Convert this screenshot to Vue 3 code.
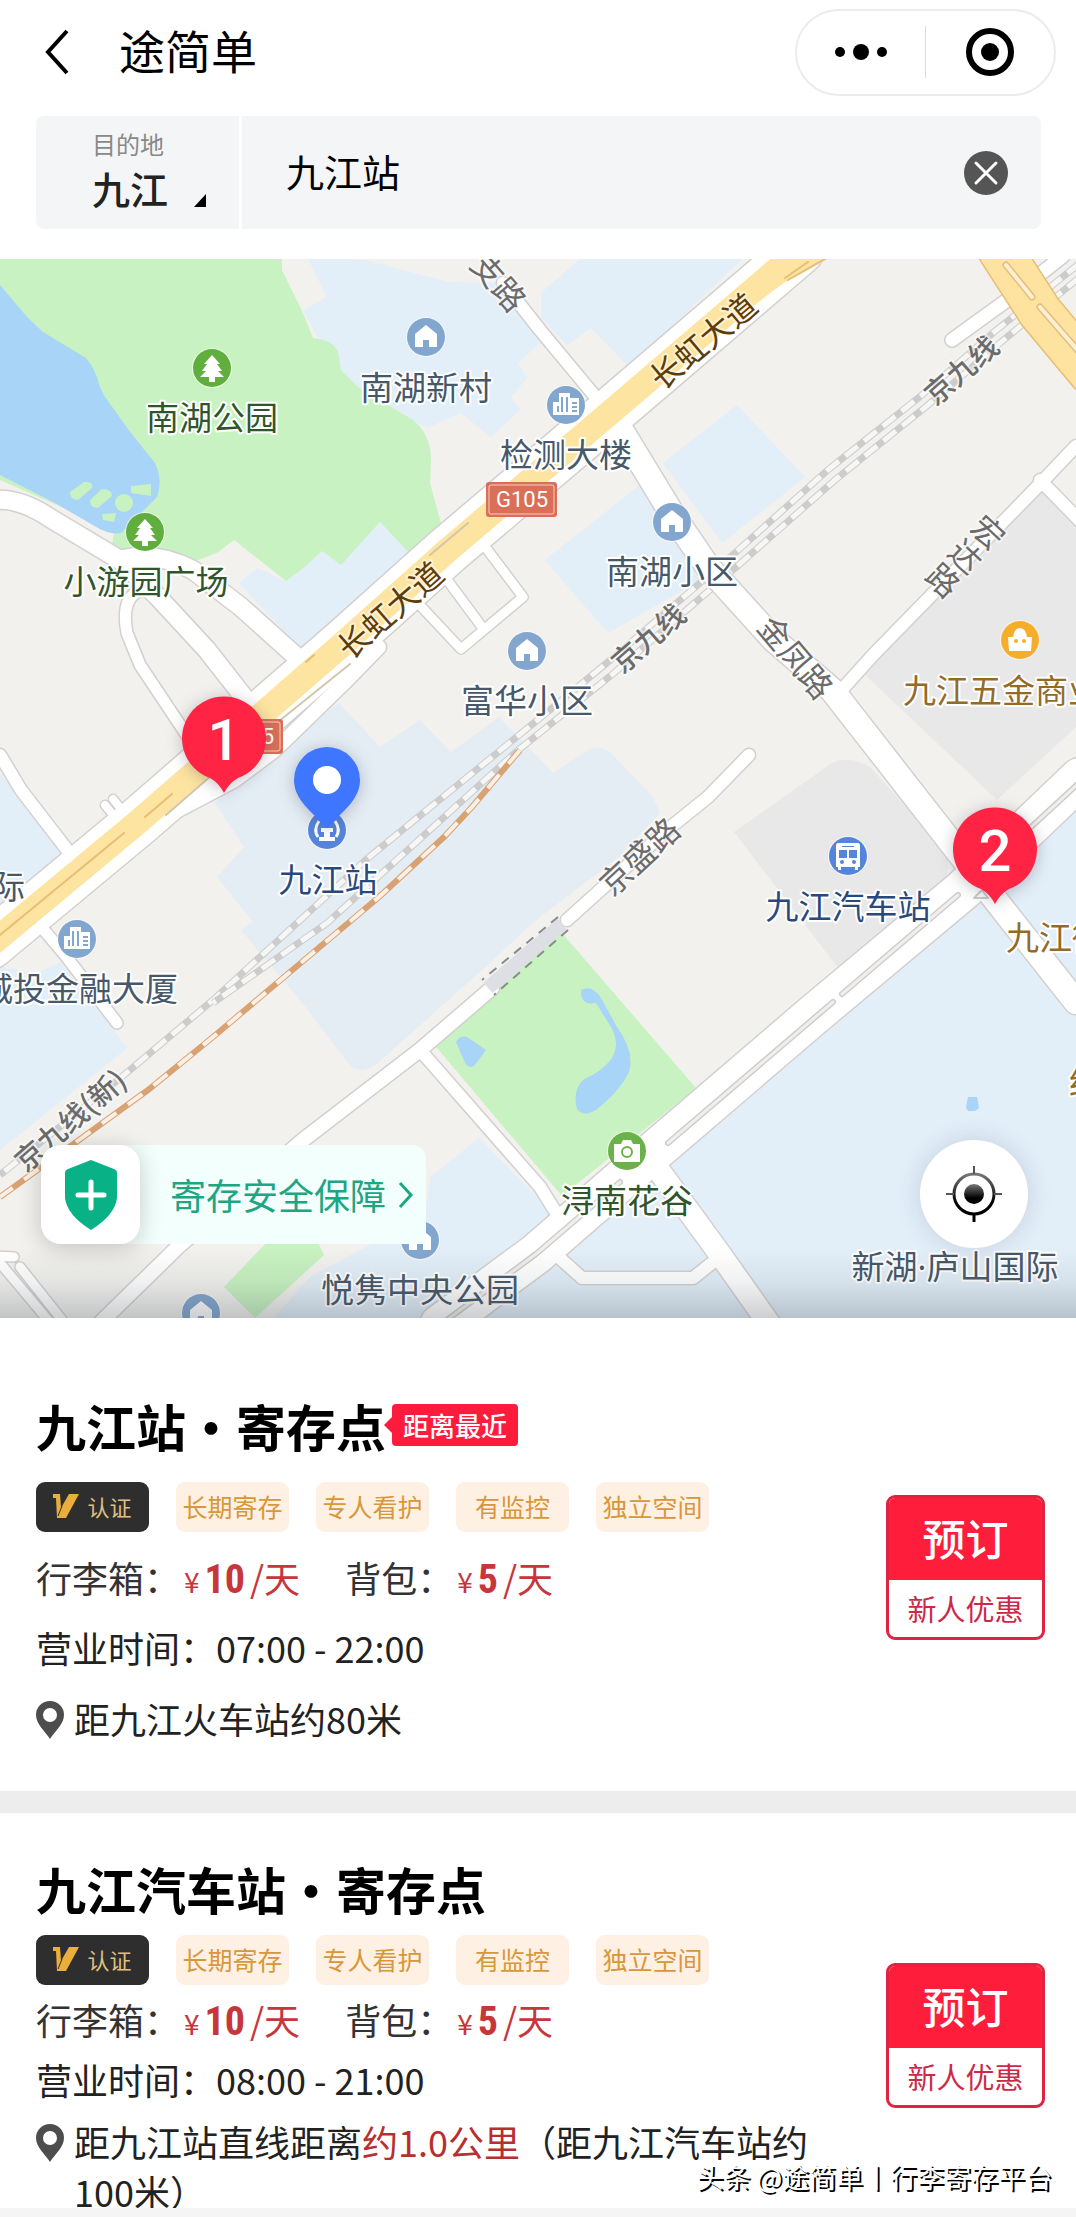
<script setup>
import { ref } from 'vue'

const keyword = ref('九江站')

const areas = [
  // residential and office blocks
  { fill: '#e2eef8', d: 'M306 255L327 297L303 310L318 338L336 347L341 370L358 387L413 420L427 428L461 413L491 437L520 410L511 397L527 378L518 363L546 338L503 283L448 282L365 260Z' },
  { fill: '#e2eef8', d: 'M239 583L258 568L286 581L305 567L322 551L341 565L380 522L411 555L360 610L301 650Z' },
  { fill: '#e2eef8', d: 'M541 293L581 258L743 258L629 367L591 328L567 345L541 317Z' },
  { fill: '#e2eef8', d: 'M737 405L805 477L722 543L663 463Z' },
  { fill: '#e2eef8', d: 'M545 560L650 477L708 550L701 580L608 633Z' },
  { fill: '#e2eef8', d: 'M0 773L64 857L0 913Z' },
  { fill: '#e2eef8', d: 'M0 967L38 973L60 962L127 1048L0 1150Z' },
  { fill: '#e2eef8', d: 'M479 1138L430 1177L425 1215L310 1277L272 1320L448 1320L560 1220Z' },
  { fill: '#e2eef8', d: 'M1076 800L1000 870L940 920L650 1165L458 1320L1076 1320Z' },
  // railway station grounds
  { fill: '#e4ecf4', d: 'M339 703L380 747L420 720L451 752L499 717L553 773L588 750Q600 745 610 752L653 797L660 813L619 857L536 920L482 970L379 1062Q361 1077 348 1063L300 1000L241 930L253 922L217 877L244 847L215 803L230 785Z' },
  // bus station and market
  { fill: '#e8e8e9', d: 'M734 832L832 763Q849 755 870 767L949 853L946 887L842 973Z' },
  { fill: '#e8e8e9', d: 'M1040 487L1076 520L1076 727L997 800L863 673Z' },
  // parks
  { fill: '#c8f2c1', d: 'M0 255L282 255L282 270L303 313L313 338Q333 340 338 352L341 370L358 387L413 420Q432 435 431 463L430 483L442 527L411 555L380 522L341 565L322 551L305 567L286 581L234 540L217 553L193 562L151 555L112 548L114 530L0 480Z' },
  { fill: '#c8f2c1', d: 'M562 933L696 1088L562 1196L432 1042L505 978Z' },
  { fill: '#c8f2c1', d: 'M269 1240L317 1240L324 1255L255 1318L224 1287Z' },
  // water
  { fill: '#a8d4f7', d: 'M0 285L28 318L43 332L86 358Q95 368 100 387L105 397L131 433L155 463Q163 480 157 497L141 513L121 533Q110 535 98 528L55 503L0 475Z' },
  { fill: '#a8d4f7', d: 'M456 1042Q460 1035 467 1037L486 1050L475 1065Q470 1070 465 1063Z' },
  { fill: '#a8d4f7', d: 'M581 990Q592 984 601 998L617 1027Q635 1052 629 1072Q622 1088 602 1105Q586 1120 577 1109Q572 1090 584 1079Q606 1070 614 1054Q620 1040 608 1022L596 1003Q580 1006 581 990Z' },
  { fill: '#a8d4f7', d: 'M968 1097H977L979 1108L975 1111H968L966 1107Z' },
  { fill: '#c8f2c1', d: 'M70 492L84 482Q94 481 92 488L78 500Q70 500 70 492ZM90 500L102 489Q112 489 112 496L98 508Q90 508 90 500ZM131 486L151 484V496L131 493ZM102 514L116 513L114 522L103 520Z' },
]

// white streets with their widths
const streets = [
  { w: 12, d: 'M503 283L540 330L608 412' },
  { w: 24, d: 'M618 425L674 517L708 567L774 640L832 690L949 840L1001 907L1076 1002' },
  { w: 12, d: 'M1076 446L1040 484L873 655L838 694' },
  { w: 12, d: 'M1040 480L1080 521' },
  { w: 13, d: 'M952 340L1010 298L1063 256' },
  { w: 18, d: 'M-5 500Q20 498 50 518L120 560Q155 550 193 570L241 607L300 660' },
  { w: 11, d: 'M143 590Q120 595 127 633L140 665L190 740' },
  { w: 18, d: 'M125 565L158 597L207 650L250 705' },
  { w: 12, d: 'M0 755L21 790L75 860' },
  { w: 8, d: 'M105 805L117 820M113 799L125 814' },
  { w: 11, d: 'M38 923L65 955L117 1023' },
  { w: 14, d: 'M379 647L344 683L275 750L235 780L165 817L110 865' },
  { w: 9, d: 'M415 600L461 649L523 597L480 540M445 577L482 627' },
  { w: 12, d: 'M749 755L708 797L667 830L567 920' },
  { w: 14, d: 'M492 988L420 1050L303 1140L180 1245L98 1325' },
  { w: 12, d: 'M420 1050L540 1187L562 1222' },
  { w: 22, d: 'M655 1165L722 1257L770 1325' },
  { w: 12, d: 'M553 1252L582 1278H693L722 1255' },
  { w: 9, d: 'M-4 1256L14 1257M0 1263L52 1325M20 1267L66 1325' },
]

const rails = [
  'M1080 263L994 332L922 395L829 469L736 552L608 662L540 718L368 858L213 1000L124 1075L0 1175',
  'M1080 277L1000 343L928 405L835 480L742 562L614 673L516 752L327 923L213 1003',
]

const green = '#30552a'
const slate = '#46586a'
const navy = '#29497c'
const brown = '#946a26'

const labels = [
  { text: '南湖公园', x: 212, y: 430, color: green },
  { text: '小游园广场', x: 146, y: 594, color: green },
  { text: '南湖新村', x: 426, y: 400, color: slate },
  { text: '检测大楼', x: 566, y: 467, color: slate },
  { text: '南湖小区', x: 672, y: 584, color: slate },
  { text: '富华小区', x: 527, y: 713, color: slate },
  { text: '九江站', x: 328, y: 892, color: navy },
  { text: '九江汽车站', x: 848, y: 919, color: navy },
  { text: '浔南花谷', x: 627, y: 1213, color: green },
  { text: '悦隽中央公园', x: 420, y: 1302, color: slate },
  { text: '新湖·庐山国际', x: 955, y: 1279, color: slate },
  { text: '九江五金商业', x: 903, y: 703, color: brown, anchor: 'start' },
  { text: '九江街', x: 1006, y: 950, color: brown, anchor: 'start' },
  { text: '红', x: 1069, y: 1094, color: brown, anchor: 'start' },
  { text: '际', x: 25, y: 899, color: slate, anchor: 'end' },
  { text: '城投金融大厦', x: 178, y: 1001, color: slate, anchor: 'end' },
]

const roadLabels = [
  { text: '长虹大道', x: 704, y: 342, angle: -40, color: '#5b3c0c' },
  { text: '长虹大道', x: 391, y: 611, angle: -41, color: '#5b3c0c' },
  { text: '京九线', x: 961, y: 370, angle: -41, color: '#6b6b6b', bold: true },
  { text: '京九线', x: 648, y: 638, angle: -41, color: '#6b6b6b', bold: true },
  { text: '京九线(新)', x: 70, y: 1120, angle: -41, color: '#6b6b6b', bold: true },
  { text: '支路', x: 498, y: 283, angle: 49, color: '#6b6b6b' },
  { text: '金凤路', x: 795, y: 658, angle: 50, color: '#6b6b6b' },
  { text: '京盛路', x: 640, y: 857, angle: -43, color: '#6b6b6b' },
]

const pois = [
  { icon: 'tree', x: 212, y: 368, color: '#5fae3e' },
  { icon: 'tree', x: 145, y: 532, color: '#5fae3e' },
  { icon: 'house', x: 426, y: 337, color: '#83a6cf' },
  { icon: 'house', x: 672, y: 522, color: '#83a6cf' },
  { icon: 'house', x: 527, y: 651, color: '#83a6cf' },
  { icon: 'house', x: 420, y: 1240, color: '#83a6cf' },
  { icon: 'house', x: 201, y: 1313, color: '#83a6cf' },
  { icon: 'office', x: 566, y: 405, color: '#83a6cf' },
  { icon: 'office', x: 77, y: 939, color: '#83a6cf' },
  { icon: 'bag', x: 1020, y: 640, color: '#f5ae2c' },
  { icon: 'bus', x: 848, y: 856, color: '#5585da' },
  { icon: 'camera', x: 627, y: 1151, color: '#69b148' },
  { icon: 'train', x: 327, y: 830, color: '#5585da' },
]

const pins = [
  { no: 1, x: 224, y: 739 },
  { no: 2, x: 995, y: 850 },
]

const tags = ['长期寄存', '专人看护', '有监控', '独立空间']

const spots = [
  { id: 1, name: '九江站・寄存点', nearest: true, hours: '07:00 - 22:00', place: '距九江火车站约80米' },
  {
    id: 2,
    name: '九江汽车站・寄存点',
    compact: true,
    hours: '08:00 - 21:00',
    place: '距九江站直线距离',
    distance: '约1.0公里',
    note: '（距九江汽车站约100米）',
  },
]
</script>

<template>
  <div class="page">
    <header class="navbar">
      <button class="back" aria-label="返回">
        <svg viewBox="0 0 26 46" width="26" height="46">
          <path d="M23 2L4 23L23 44" fill="none" stroke="#000" stroke-width="4" />
        </svg>
      </button>
      <h1 class="title">途简单</h1>
      <div class="capsule">
        <button aria-label="更多">
          <svg viewBox="0 0 54 18" width="54" height="18">
            <circle cx="6" cy="9" r="5" />
            <circle cx="27" cy="9" r="8" />
            <circle cx="48" cy="9" r="5" />
          </svg>
        </button>
        <span class="capsule-line"></span>
        <button aria-label="关闭">
          <svg viewBox="0 0 50 50" width="50" height="50">
            <circle cx="25" cy="25" r="21" fill="none" stroke="#000" stroke-width="6" />
            <circle cx="25" cy="25" r="9" />
          </svg>
        </button>
      </div>
    </header>

    <div class="search">
      <button class="city">
        <span class="city-label">目的地</span>
        <span class="city-name">
          九江
          <svg viewBox="0 0 12 13" width="12" height="13"><path d="M12 0V13H0Z" /></svg>
        </span>
      </button>
      <div class="field">
        <input v-model="keyword" type="text" aria-label="搜索地点" />
        <button class="clear" aria-label="清空" @click="keyword = ''">
          <svg viewBox="0 0 44 44" width="44" height="44">
            <circle cx="22" cy="22" r="22" fill="#555" />
            <path d="M12 12L32 32M32 12L12 32" stroke="#fff" stroke-width="3" stroke-linecap="round" />
          </svg>
        </button>
      </div>
    </div>

    <section class="map">
      <svg class="map-canvas" viewBox="0 259 1076 1059">
        <rect y="259" width="1076" height="1059" fill="#f2f1ee" />
        <path v-for="(area, i) in areas" :key="i" :d="area.d" :fill="area.fill" />
        <circle cx="124" cy="503" r="9" fill="#c8f2c1" />

        <!-- railways -->
        <g fill="none">
          <g v-for="d in rails" :key="d">
            <path :d="d" stroke="#cccccd" stroke-width="7" />
            <path :d="d" stroke="#f6f6f5" stroke-width="5" stroke-dasharray="16 8" />
          </g>
          <path d="M520 750L472 807L444 837L379 897L213 1037L148 1090L79 1140L0 1197" stroke="#d9a273" stroke-width="6" />
          <path d="M520 750L472 807L444 837L379 897L213 1037L148 1090L79 1140L0 1197" stroke="#fbf0e3" stroke-width="4" stroke-dasharray="18 14" />
        </g>

        <!-- streets: every casing first, then the fill, so that junctions stay open -->
        <g fill="none" stroke-linecap="round" stroke-linejoin="round">
          <path v-for="s in streets" :key="s.d" :d="s.d" stroke="#d3d1cf" :stroke-width="s.w + 3" />
          <path d="M440 1325L536 1254L657 1149L811 1017L963 890L1080 778" stroke="#d3d1cf" stroke-width="43" />
          <path d="M-10 945L138 822L344 643L448 550L605 417L674 358L800 250" stroke="#d3d1cf" stroke-width="51" />
          <path v-for="s in streets" :key="'f' + s.d" :d="s.d" stroke="#fff" :stroke-width="s.w" />
          <path d="M440 1325L536 1254L657 1149L811 1017L963 890L1080 778" stroke="#fff" stroke-width="40" />
          <path d="M440 1325L536 1254L620 1182M668 1143L833 1002M842 994L958 895M1030 828L1080 782" stroke="#cfcccb" stroke-width="6" />
          <path d="M440 1325L536 1254L620 1182M668 1143L833 1002M842 994L958 895M1030 828L1080 782" stroke="#f1efed" stroke-width="3" />
          <path d="M974 898L982 890L988 898Z" stroke="#cfcccb" stroke-width="2" />
          <path d="M-10 945L138 822L344 643L448 550L605 417L674 358L800 250" stroke="#fff" stroke-width="48" />
          <path d="M-10 945L138 822L344 643L448 550L605 417L674 358L800 250" stroke="#fde4a0" stroke-width="25" />
          <path d="M690 345L780 277L830 250" stroke="#fde4a0" stroke-width="14" />
          <path d="M785 278L808 262M788 280L830 256M0 935L124 833M145 817L172 794M306 662L314 655" stroke="#e8bd78" stroke-width="2" />
          <path d="M166 815L212 775L350 664M430 555L468 523" stroke="#d4c6ac" stroke-width="2" />
          <path d="M1000 250L1040 312L1090 372" stroke="#e9bd72" stroke-width="46" />
          <path d="M1000 250L1040 312L1090 372" stroke="#fde2a0" stroke-width="43" />
          <path d="M1006 265L1032 297M1040 307L1080 353" stroke="#e6bd7d" stroke-width="7" />
          <path d="M1006 265L1032 297M1040 307L1080 353" stroke="#fcf0d2" stroke-width="4" />
        </g>

        <!-- tunnel -->
        <path d="M562 924L488 988" stroke="#dedfe4" stroke-width="14" />
        <path d="M558 917L482 980M568 930L494 995" stroke="#8b8b8f" stroke-width="2" stroke-dasharray="9 7" />

        <g class="road-names">
          <text
            v-for="(l, i) in roadLabels"
            :key="i"
            :transform="`translate(${l.x} ${l.y}) rotate(${l.angle})`"
            :fill="l.color"
            :class="{ rail: l.bold }"
            y="11"
          >{{ l.text }}</text>
          <text transform="translate(965 557) rotate(43)" x="0 0 0" y="-22 11 44" fill="#6b6b6b">宏达路</text>
        </g>

        <!-- road number shields -->
        <g v-for="b in [[486, 482], [212, 719]]" :key="b[0]" :transform="`translate(${b[0]} ${b[1]})`">
          <rect width="71" height="35" rx="3" fill="#d96f57" />
          <rect x="3" y="3" width="65" height="29" rx="2" fill="none" stroke="#f5d0c4" stroke-width="1" />
          <text class="shield" x="36" y="25">G105</text>
        </g>

        <!-- points of interest -->
        <g v-for="(p, i) in pois" :key="i" :transform="`translate(${p.x} ${p.y})`">
          <circle r="20" fill="#fff" opacity=".6" />
          <circle r="19" :fill="p.color" />
          <path v-if="p.icon === 'tree'" fill="#fff" d="M0-13L8-4H5L10 3H6L12 9H3V14H-3V9H-12L-6 3H-10L-5-4H-8Z" />
          <path v-else-if="p.icon === 'house'" fill="#fff" d="M0-12L11-3V10H3V3H-3V10H-11V-3Z" />
          <g v-else-if="p.icon === 'office'">
            <path fill="#fff" d="M-13 10V-3H-7V-12H4V-7H13V10Z" />
            <path :stroke="p.color" stroke-width="2" d="M-8 7V1M-4 7V-8M1 7V-8M6-2H11M6 2H11M6 6H11" />
          </g>
          <g v-else-if="p.icon === 'bag'">
            <path fill="#fff" d="M-11 11L-12-3H12L11 11Z" />
            <path fill="#fff" d="M-7-2Q-6-12 0-12Q6-12 7-2Z" />
            <circle cx="-4" cy="1" r="2" :fill="p.color" />
            <circle cx="4" cy="1" r="2" :fill="p.color" />
          </g>
          <g v-else-if="p.icon === 'bus'">
            <path fill="#fff" d="M-10-13H10Q12-13 12-10V11H10V14H7V11H-7V14H-10V11H-12V-10Q-12-13-10-13Z" />
            <path :fill="p.color" d="M-9-6H-1V2H-9ZM1-6H9V2H1ZM-6-10H6V-9H-6Z" />
            <circle cx="-6" cy="6" r="2" :fill="p.color" />
            <circle cx="6" cy="6" r="2" :fill="p.color" />
          </g>
          <g v-else-if="p.icon === 'camera'">
            <path fill="#fff" d="M-13-7H-6L-4-11H4L6-7H13V11H-13Z" />
            <circle cy="1" r="5" fill="none" :stroke="p.color" stroke-width="2" />
          </g>
          <g v-else>
            <path fill="none" stroke="#fff" stroke-width="3" d="M-8-9Q-14 0-9 7M8-9Q14 0 9 7" />
            <path fill="#fff" d="M-6-2H6V2H3V7H8V11H-8V7H-3V2H-6Z" />
          </g>
        </g>

        <g class="place-names">
          <text
            v-for="l in labels"
            :key="l.text"
            :x="l.x"
            :y="l.y"
            :fill="l.color"
            :text-anchor="l.anchor || 'middle'"
          >{{ l.text }}</text>
        </g>

        <!-- current position -->
        <g class="drop" transform="translate(327 780)">
          <path fill="#3f76ff" d="M-33 0A33 33 0 1 1 33 0C33 20 15 31 3 46Q0 50-3 46C-15 31-33 20-33 0Z" />
          <circle r="14" fill="#fff" />
        </g>

        <g v-for="p in pins" :key="p.no" class="drop" :transform="`translate(${p.x} ${p.y})`">
          <path fill="#ff2344" d="M-14 39A42 42 0 1 1 14 39Q5 44 0 54Q-5 44-14 39Z" />
          <text class="pin-no" y="21">{{ p.no }}</text>
        </g>
      </svg>

      <a class="safety" href="#">
        <span class="safety-icon">
          <svg viewBox="0 0 54 70" width="54" height="70">
            <path fill="#09b286" d="M27 0L50 9Q53 10 53 13V38Q51 55 27 70Q3 55 1 38V13Q1 10 4 9Z" />
            <path d="M27 22V48M14 35H40" stroke="#fff" stroke-width="5" stroke-linecap="round" />
          </svg>
        </span>
        <span class="safety-text">寄存安全保障</span>
        <svg viewBox="0 0 16 28" width="16" height="28">
          <path d="M2 2L13 14L2 26" fill="none" stroke="#1ea582" stroke-width="3" />
        </svg>
      </a>

      <button class="locate" aria-label="定位">
        <svg viewBox="0 0 60 60" width="60" height="60">
          <defs>
            <linearGradient id="locate-ink" x1="0" y1="0" x2="0" y2="1">
              <stop offset="0" stop-color="#777" />
              <stop offset=".7" stop-color="#000" />
            </linearGradient>
          </defs>
          <circle cx="30" cy="30" r="20" fill="none" stroke="url(#locate-ink)" stroke-width="3" />
          <circle cx="30" cy="30" r="10" fill="url(#locate-ink)" />
          <path d="M30 2V10M2 30H10M50 30H58" stroke="#555" stroke-width="2" />
          <path d="M30 50V58" stroke="#000" stroke-width="3" />
        </svg>
      </button>
    </section>

    <main class="list">
      <article v-for="spot in spots" :key="spot.id" class="card" :class="{ compact: spot.compact }">
        <h2 class="name">
          {{ spot.name }}<span v-if="spot.nearest" class="nearest">距离最近</span>
        </h2>
        <div class="body">
          <div class="info">
            <div class="tags">
              <span class="tag verified">
                <svg viewBox="0 0 26 24" width="26" height="24">
                  <path fill="#e9ae3c" d="M0 0H7L8 14L16 0H26L13 24H4L3 4H0Z" />
                  <path d="M9 12L5 22" stroke="#2e2e2e" stroke-width="1" />
                </svg>
                认证
              </span>
              <span v-for="tag in tags" :key="tag" class="tag">{{ tag }}</span>
            </div>
            <p class="row prices">
              <span>行李箱：<span class="price"><small>¥</small><b>10</b>/天</span></span>
              <span>背包：<span class="price"><small>¥</small><b>5</b>/天</span></span>
            </p>
            <p class="row">营业时间：{{ spot.hours }}</p>
            <p class="place">
              <svg viewBox="0 0 28 38" width="28" height="38">
                <path fill="#4d4d4d" fill-rule="evenodd" d="M14 0A14 14 0 0 1 28 14C28 23 19 30 14 38C9 30 0 23 0 14A14 14 0 0 1 14 0ZM14 7A7 7 0 1 0 14 21A7 7 0 1 0 14 7Z" />
              </svg>
              <span>{{ spot.place }}<em v-if="spot.distance">{{ spot.distance }}</em>{{ spot.note }}</span>
            </p>
          </div>
          <button class="book">
            <span class="book-main">预订</span>
            <span class="book-offer">新人优惠</span>
          </button>
        </div>
      </article>
    </main>

    <div class="watermark">头条 @途简单丨行李寄存平台</div>
    <footer class="bottom"></footer>
  </div>
</template>

<style>
body {
  margin: 0;
  background: #fff;
}
</style>

<style scoped>
.page {
  position: relative;
  display: flex;
  flex-direction: column;
  height: 100vh;
  background: #fff;
  color: #222;
  font-family: "Noto Sans CJK SC", sans-serif;
  font-size: 36px;
}

button {
  display: flex;
  align-items: center;
  justify-content: center;
  margin: 0;
  padding: 0;
  border: 0;
  background: none;
  color: inherit;
  font: inherit;
  cursor: pointer;
}

svg {
  flex: none;
}

/* Navigation bar */
.navbar {
  display: flex;
  align-items: center;
  flex: none;
  height: 88px;
  padding: 8px 20px 8px 44px;
}

.title {
  flex: 1;
  margin: 0 0 0 49px;
  padding-bottom: 6px;
  color: #000;
  font-size: 46px;
  font-weight: 400;
  line-height: 64px;
}

.capsule {
  display: flex;
  align-items: center;
  box-sizing: border-box;
  width: 261px;
  height: 87px;
  border: 2px solid #ececec;
  border-radius: 44px;
}

.capsule button {
  flex: 1;
  height: 100%;
}

.capsule-line {
  width: 1px;
  height: 52px;
  background: #ddd;
}

/* Search */
.search {
  display: flex;
  flex: none;
  gap: 3px;
  height: 113px;
  margin: 12px 35px 30px 36px;
  border-radius: 8px;
  overflow: hidden;
}

.city {
  flex-direction: column;
  align-items: flex-start;
  width: 203px;
  padding: 0 0 5px 56px;
  background: #f4f5f7;
}

.city-label {
  color: #888;
  font-size: 24px;
  line-height: 36px;
}

.city-name {
  display: flex;
  align-items: flex-end;
  gap: 26px;
  color: #222;
  font-size: 38px;
  font-weight: 500;
  line-height: 52px;
}

.city-name svg {
  margin-bottom: 7px;
}

.field {
  display: flex;
  flex: 1;
  align-items: center;
  padding: 0 33px 0 44px;
  background: #f4f5f7;
}

.field input {
  flex: 1;
  min-width: 0;
  padding: 0 0 4px;
  border: 0;
  outline: 0;
  background: none;
  color: #000;
  font: inherit;
  font-size: 38px;
}

/* Map */
.map {
  position: relative;
  flex: none;
}

.map::after {
  content: "";
  position: absolute;
  inset: auto 0 0;
  height: 70px;
  background: linear-gradient(rgba(60, 70, 80, 0), rgba(60, 70, 80, 0.08) 50%, rgba(60, 70, 80, 0.26));
  pointer-events: none;
}

.map-canvas {
  display: block;
  width: 100%;
  height: auto;
}

.place-names text,
.road-names text {
  stroke: #fff;
  stroke-width: 4px;
  stroke-linejoin: round;
  paint-order: stroke;
}

.place-names text {
  font-family: "Noto Sans", "Noto Sans CJK SC", sans-serif;
  font-size: 33px;
}

.road-names text {
  font-size: 32px;
  stroke-opacity: 0.5;
  text-anchor: middle;
}

.road-names .rail {
  font-size: 29px;
  font-weight: 500;
}

.shield {
  fill: #fff;
  font-family: Roboto, sans-serif;
  font-size: 22px;
  text-anchor: middle;
}

.drop {
  filter: drop-shadow(0 2px 8px rgba(60, 60, 80, 0.3));
}

.pin-no {
  fill: #fff;
  font-family: Roboto, sans-serif;
  font-size: 58px;
  font-weight: 500;
  text-anchor: middle;
}

.safety {
  position: absolute;
  z-index: 1;
  left: 41px;
  bottom: 74px;
  display: flex;
  align-items: center;
  width: 385px;
  height: 99px;
  border-radius: 20px 14px 0 20px;
  background: #f3fffc;
  color: #1ea582;
  text-decoration: none;
}

.safety-icon {
  display: flex;
  align-items: center;
  justify-content: center;
  width: 99px;
  height: 99px;
  border-radius: 20px;
  background: #fff;
  box-shadow: 0 4px 24px rgba(0, 0, 0, 0.2);
}

.safety-text {
  margin: 0 12px 0 30px;
  padding-bottom: 2px;
  font-size: 36px;
}

.locate {
  position: absolute;
  z-index: 1;
  right: 48px;
  bottom: 70px;
  width: 108px;
  height: 108px;
  border-radius: 50%;
  background: #fff;
  box-shadow: 0 0 24px rgba(60, 80, 110, 0.18);
}

/* Storage spots */
.list {
  flex: 1;
  min-height: 0;
  overflow-y: auto;
  scrollbar-width: none;
}

.list::-webkit-scrollbar {
  display: none;
}

.card {
  padding: 72px 31px 38px 36px;
}

.card + .card {
  border-top: 22px solid #ededed;
}

.card.compact {
  padding-top: 40px;
  padding-bottom: 0;
}

.name {
  display: flex;
  align-items: center;
  gap: 6px;
  margin: 0 0 22px;
  color: #000;
  font-size: 50px;
  font-weight: 700;
  line-height: 70px;
}

.compact .name {
  margin-bottom: 12px;
}

.nearest {
  position: relative;
  padding: 0 11px;
  border-radius: 4px;
  background: #fd1c3c;
  color: #fff;
  font-size: 26px;
  font-weight: 500;
  line-height: 42px;
}

.nearest::before {
  content: "";
  position: absolute;
  top: 13px;
  left: -8px;
  border: solid transparent;
  border-width: 8px 8px 8px 0;
  border-right-color: #fd1c3c;
}

.body {
  display: flex;
  align-items: flex-start;
  justify-content: space-between;
}

.info {
  flex: 1;
  max-width: 784px;
}

.tags {
  display: flex;
  gap: 27px;
  margin-bottom: 10px;
}

.compact .tags {
  margin-bottom: 4px;
}

.tag {
  display: flex;
  align-items: center;
  justify-content: center;
  gap: 8px;
  box-sizing: border-box;
  width: 113px;
  height: 50px;
  padding-bottom: 3px;
  border-radius: 9px;
  background: #fef0e2;
  color: #d8973a;
  font-size: 25px;
}

.tag.verified {
  background: #2e2e2e;
  color: #e0c080;
  font-size: 22px;
}

.row {
  height: 70px;
  margin: 0;
  line-height: 70px;
}

.compact .row {
  height: 60px;
  line-height: 60px;
}

.prices {
  display: flex;
  gap: 45px;
  color: #333;
}

.price {
  margin-left: 4px;
  color: #c5373b;
}

.price small {
  margin-right: 5px;
  font-size: 28px;
  line-height: 1;
}

.price b {
  margin-right: 5px;
  font-family: "Roboto Condensed", Roboto, sans-serif;
  font-size: 40px;
  line-height: 1;
}

.place {
  display: flex;
  gap: 10px;
  margin: 0;
  line-height: 50px;
  padding: 11px 0 10px;
}

.compact .place {
  padding: 7px 0 0;
}

.place svg {
  margin-top: 8px;
}

.place em {
  color: #b5302f;
  font-style: normal;
}

.book {
  flex-direction: column;
  flex: none;
  box-sizing: border-box;
  width: 159px;
  height: 145px;
  margin-top: 13px;
  border: 3px solid #e02343;
  border-radius: 9px;
  overflow: hidden;
}

.compact .book {
  margin-top: 28px;
}

.book-main {
  width: 100%;
  padding-bottom: 4px;
  background: #fe1d3b;
  color: #fff;
  font-size: 43px;
  font-weight: 500;
  line-height: 78px;
}

.book-offer {
  color: #cc2947;
  font-size: 29px;
  line-height: 57px;
}

.watermark {
  position: absolute;
  right: 24px;
  bottom: 20px;
  color: #fff;
  font-size: 27px;
  line-height: 40px;
  text-shadow: 2px 2px 0 #000;
}

.bottom {
  flex: none;
  height: 9px;
  background: #f5f5f5;
}
</style>
